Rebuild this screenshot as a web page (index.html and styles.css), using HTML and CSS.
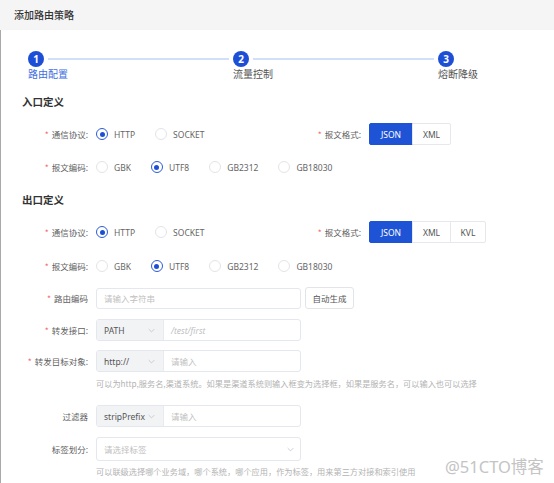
FILE: index.html
```html
<!DOCTYPE html>
<html lang="zh">
<head>
<meta charset="utf-8">
<link rel="stylesheet" href="styles.css">
</head>
<body>
<div class="header">添加路由策略</div>
<div class="main">
  <div class="steps">
    <div class="step">
      <div class="step-head"><span class="dot">1</span><span class="line"></span></div>
      <div class="step-title active">路由配置</div>
    </div>
    <div class="step">
      <div class="step-head"><span class="dot">2</span><span class="line"></span></div>
      <div class="step-title">流量控制</div>
    </div>
    <div class="step last">
      <div class="step-head"><span class="dot">3</span></div>
      <div class="step-title">熔断降级</div>
    </div>
  </div>

  <div class="section-title t1">入口定义</div>
  <div class="row r-first">
    <div class="label"><span class="req">*</span>通信协议:</div>
    <div class="radios">
      <span class="radio on"><i></i>HTTP</span>
      <span class="radio"><i></i>SOCKET</span>
    </div>
    <div class="label narrow"><span class="req">*</span>报文格式:</div>
    <div class="seg"><span class="on w-json">JSON</span><span class="w-xml">XML</span></div>
  </div>
  <div class="row r-g11">
    <div class="label"><span class="req">*</span>报文编码:</div>
    <div class="radios">
      <span class="radio"><i></i>GBK</span>
      <span class="radio on"><i></i>UTF8</span>
      <span class="radio"><i></i>GB2312</span>
      <span class="radio"><i></i>GB18030</span>
    </div>
  </div>

  <div class="section-title t2">出口定义</div>
  <div class="row r-first">
    <div class="label"><span class="req">*</span>通信协议:</div>
    <div class="radios">
      <span class="radio on"><i></i>HTTP</span>
      <span class="radio"><i></i>SOCKET</span>
    </div>
    <div class="label narrow"><span class="req">*</span>报文格式:</div>
    <div class="seg"><span class="on w-json">JSON</span><span class="w-xml">XML</span><span class="w-kvl">KVL</span></div>
  </div>
  <div class="row r-g12">
    <div class="label"><span class="req">*</span>报文编码:</div>
    <div class="radios">
      <span class="radio"><i></i>GBK</span>
      <span class="radio on"><i></i>UTF8</span>
      <span class="radio"><i></i>GB2312</span>
      <span class="radio"><i></i>GB18030</span>
    </div>
  </div>

  <div class="row r-g10">
    <div class="label"><span class="req">*</span>路由编码</div>
    <div class="input plain small"><span class="ph">请输入字符串</span></div>
    <div class="btn">自动生成</div>
  </div>
  <div class="row r-g10">
    <div class="label"><span class="req">*</span>转发接口:</div>
    <div class="input combo">
      <div class="prefix"><span>PATH</span><svg class="chev" viewBox="0 0 10 6"><path d="M1 1l4 4 4-4"/></svg></div>
      <span class="ph it">/test/first</span>
    </div>
  </div>
  <div class="row r-g9">
    <div class="label"><span class="req">*</span>转发目标对象:</div>
    <div class="input combo">
      <div class="prefix"><span>http://</span><svg class="chev" viewBox="0 0 10 6"><path d="M1 1l4 4 4-4"/></svg></div>
      <span class="ph">请输入</span>
    </div>
  </div>
  <div class="help h1">可以为http,服务名,渠道系统。如果是渠道系统则输入框变为选择框，如果是服务名，可以输入也可以选择</div>

  <div class="row r-g15">
    <div class="label">过滤器</div>
    <div class="input combo">
      <div class="prefix"><span>stripPrefix</span><svg class="chev" viewBox="0 0 10 6"><path d="M1 1l4 4 4-4"/></svg></div>
      <span class="ph">请输入</span>
    </div>
  </div>
  <div class="row r-g10 tall">
    <div class="label">标签划分:</div>
    <div class="input select"><span class="ph">请选择标签</span><svg class="chev" viewBox="0 0 10 6"><path d="M1 1l4 4 4-4"/></svg></div>
  </div>
  <div class="help h2">可以联级选择哪个业务域，哪个系统，哪个应用，作为标签，用来第三方对接和索引使用</div>

  <div class="watermark">@51CTO博客</div>
</div>
</body>
</html>
```

FILE: styles.css
```css
* { box-sizing: border-box; }
html, body { margin: 0; padding: 0; background: #fff; }
body {
  width: 554px;
  height: 483px;
  overflow: hidden;
  font-family: "Noto Sans CJK SC", "Noto Sans", sans-serif;
  color: #555;
}
.header {
  height: 30px;
  line-height: 30px;
  padding-left: 14px;
  background: #f5f5f5;
  font-size: 10px;
  font-weight: 500;
  color: #333;
}
.main {
  position: relative;
  height: 453px;
  border-left: 1px solid #a9a9a9;
  padding-top: 21px;
}
.steps {
  display: flex;
  margin-left: 27px;
  width: 426px;
}
.step { flex: 1; }
.step.last { flex: none; width: 16px; }
.step-head { display: flex; align-items: center; height: 16px; }
.dot {
  width: 16px; height: 16px; border-radius: 50%;
  background: #1d4fd6; color: #fff;
  font-size: 10px; font-weight: 700;
  display: flex; align-items: center; justify-content: center;
  flex: none;
  font-family: "Noto Sans", sans-serif;
}
.line { flex: 1; height: 2px; background: #d2dff8; margin: 0 4px; }
.step-title { font-size: 10px; line-height: 14px; white-space: nowrap; color: #555; }
.step-title.active { color: #3f6fe0; }

.section-title {
  padding-left: 21px;
  font-size: 10.5px;
  font-weight: 700;
  color: #333;
  line-height: 16px;
  height: 16px;
}
.t1 { margin-top: 13px; }
.t2 { margin-top: 14px; }

.row { display: flex; align-items: center; height: 22px; }
.row.tall { height: 24px; }
.r-first { margin-top: 13px; }
.r-g9 { margin-top: 9px; }
.r-g10 { margin-top: 10px; }
.r-g11 { margin-top: 11px; }
.r-g12 { margin-top: 12px; }
.r-g15 { margin-top: 15px; }

.label {
  width: 87px;
  margin-right: 8px;
  text-align: right;
  font-size: 8.5px;
  color: #5f5f5f;
  white-space: nowrap;
}
.label.narrow { width: 51px; margin-left: 0; }
.req { color: #f56c6c; margin-right: 3px; }

.radios { display: flex; width: 214px; gap: 20px; }
.radio {
  display: flex; align-items: center;
  font-size: 8.5px; color: #666;
  font-family: "Noto Sans", sans-serif;
  white-space: nowrap;
}
.radio i {
  width: 12px; height: 12px; border-radius: 50%;
  border: 1px solid #e2e4e8; margin-right: 6px;
  display: inline-block; position: relative;
}
.radio.on i { border-color: #2b5bd8; }
.radio.on i::after {
  content: ""; position: absolute; left: 2.5px; top: 2.5px;
  width: 5px; height: 5px; border-radius: 50%; background: #1d4fd6;
}

.seg { display: flex; height: 22px; }
.seg span {
  display: flex; align-items: center; justify-content: center;
  border: 1px solid #e6e8ec; margin-left: -1px;
  font-size: 8.5px; color: #555;
  font-family: "Noto Sans", sans-serif;
}
.seg span:first-child { margin-left: 0; border-radius: 2px 0 0 2px; }
.seg span:last-child { border-radius: 0 2px 2px 0; }
.seg span.on { background: #1f53d6; border-color: #1f53d6; color: #fff; }
.w-json { width: 44px; }
.w-xml { width: 39px; }
.w-kvl { width: 36px; }

.input {
  width: 205px;
  height: 22px;
  border: 1px solid #e4e7ed;
  border-radius: 3px;
  display: flex; align-items: center;
  font-size: 8.5px;
}
.input.small { height: 21px; }
.ph { color: #bfbfbf; padding-left: 7px; white-space: nowrap; }
.ph.it { font-style: italic; font-family: "Noto Sans", sans-serif; }
.input.combo { overflow: hidden; }
.prefix {
  width: 67px; height: 100%;
  background: #f2f3f5;
  border-right: 1px solid #e8eaee;
  display: flex; align-items: center; justify-content: space-between;
  padding: 0 8px 0 7px;
  color: #555;
  font-family: "Noto Sans", sans-serif;
  flex: none;
}
.chev { width: 7px; height: 5px; fill: none; stroke: #b8bcc4; stroke-width: 1; }
.input.select { height: 24px; justify-content: space-between; padding-right: 6px; }

.btn {
  margin-left: 4px;
  width: 49px; height: 22px;
  border: 1px solid #e2e4e8; border-radius: 3px;
  display: flex; align-items: center; justify-content: center;
  font-size: 8.5px; color: #555;
}

.help {
  margin-left: 95px;
  font-size: 8.2px;
  color: #b3b3b3;
  line-height: 14px;
  height: 14px;
  white-space: nowrap;
}
.h1 { margin-top: 4px; }
.h2 { margin-top: 3px; }

.watermark {
  position: absolute;
  left: 444px;
  top: 424px;
  font-size: 16.5px;
  color: #c4c4c4;
  font-family: "Noto Sans", "Noto Sans CJK SC", sans-serif;
  white-space: nowrap;
}
```
